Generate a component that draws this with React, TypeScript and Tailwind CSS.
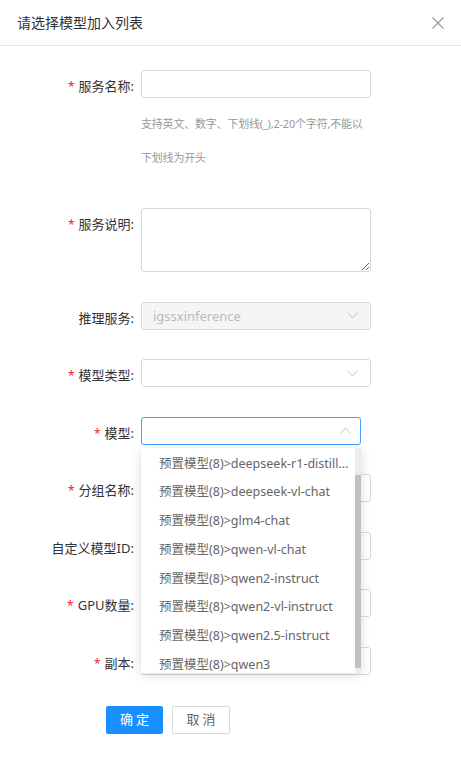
import React from 'react';

const FONT = '"Noto Sans", "Noto Sans CJK SC", sans-serif';

const models = [
  'deepseek-r1-distill-qwen-7b',
  'deepseek-vl-chat',
  'glm4-chat',
  'qwen-vl-chat',
  'qwen2-instruct',
  'qwen2-vl-instruct',
  'qwen2.5-instruct',
  'qwen3',
];

function Chevron({ up }: { up?: boolean }) {
  return (
    <svg width="11" height="7" viewBox="0 0 11 7" fill="none" stroke="#c0c4cc" strokeWidth="1">
      {up ? <path d="M0.5 6.5L5.5 1L10.5 6.5" /> : <path d="M0.5 0.5L5.5 6L10.5 0.5" />}
    </svg>
  );
}

function Label({ text, required }: { text: string; required?: boolean }) {
  return (
    <div className="w-[134px] shrink-0 text-right text-[13px] leading-[33px] text-[#333] h-[28px]">
      {required && <span className="text-[#f5222d] mr-[4px] text-[12px]">*</span>}
      {text}:
    </div>
  );
}

function Row({ label, required, children }: { label: string; required?: boolean; children: React.ReactNode }) {
  return (
    <div className="flex">
      <Label text={label} required={required} />
      <div className="ml-[7px] relative">{children}</div>
    </div>
  );
}

function TextInput({ width = 230 }: { width?: number }) {
  return (
    <div
      className="h-[28px] border border-[#d9d9d9] rounded-[3px] bg-white"
      style={{ width }}
    />
  );
}

function Select({ disabled, value }: { disabled?: boolean; value?: string }) {
  return (
    <div
      className={`w-[230px] h-[28px] border border-[#d9d9d9] rounded-[3px] flex items-center justify-between pl-[11px] pr-[12px] ${disabled ? 'bg-[#f5f5f5]' : 'bg-white'}`}
    >
      <span className="text-[13px] text-[#bbb] mt-[2px]">{value}</span>
      <Chevron />
    </div>
  );
}

export default function App() {
  return (
    <div className="w-[461px] h-[776px] bg-white overflow-hidden" style={{ fontFamily: FONT }}>
      <div className="h-[46px] border-b border-[#e8e8e8] flex items-center justify-between pl-[17px] pr-[17px]">
        <span className="text-[14px] text-[#333]">请选择模型加入列表</span>
        <svg width="12" height="12" viewBox="0 0 12 12" stroke="#999" strokeWidth="1.1">
          <path d="M0.5 0.5L11.5 11.5M11.5 0.5L0.5 11.5" />
        </svg>
      </div>

      <div className="pt-[24px]">
        <Row label="服务名称" required>
          <TextInput />
          <div className="mt-[9px] text-[11px] leading-[34px] text-[#999] whitespace-nowrap tracking-[-0.2px]">
            <div>支持英文、数字、下划线(_),2-20个字符,不能以</div>
            <div>下划线为开头</div>
          </div>
        </Row>

        <div className="mt-[33px] flex flex-col gap-[29.5px]">
          <Row label="服务说明" required>
            <textarea className="block w-[230px] h-[64px] border border-[#d9d9d9] rounded-[3px] outline-none" />
          </Row>
          <Row label="推理服务">
            <Select disabled value="igssxinference" />
          </Row>
          <Row label="模型类型" required>
            <Select />
          </Row>
          <Row label="模型" required>
            <div className="w-[220px] h-[28px] border border-[#409eff] rounded-[3px] bg-white flex items-center justify-end pr-[9px]">
              <Chevron up />
            </div>
            <div className="absolute z-10 left-0 top-[31px] w-[220px] h-[225px] bg-white shadow-[0_2px_10px_rgba(0,0,0,0.15)] overflow-hidden">
              <div className="pt-[2px]">
                {models.map((m) => (
                  <div
                    key={m}
                    className="h-[28.75px] flex items-center pl-[18px] pr-[12px] text-[12.5px] text-[#666] whitespace-nowrap"
                  >
                    <span className="truncate">预置模型(8)&gt;{m}</span>
                  </div>
                ))}
              </div>
              <div className="absolute right-0 top-0 w-[6px] h-full bg-[#ececec]">
                <div className="mt-[27px] h-[193px] bg-[#c1c1c1]" />
              </div>
            </div>
          </Row>
          <Row label="分组名称" required>
            <TextInput />
          </Row>
          <Row label="自定义模型ID">
            <TextInput />
          </Row>
          <Row label="GPU数量" required>
            <TextInput />
          </Row>
          <Row label="副本" required>
            <TextInput />
          </Row>
        </div>

        <div className="mt-[31px] pl-[106px] flex gap-[9px]">
          <button className="w-[57px] h-[28px] bg-[#1890ff] text-white text-[13px] rounded-[2px] tracking-[3px] pl-[3px]">
            确定
          </button>
          <button className="w-[58px] h-[28px] border border-[#d9d9d9] bg-white text-[#666] text-[13px] rounded-[2px] tracking-[3px] pl-[3px]">
            取消
          </button>
        </div>
      </div>
    </div>
  );
}
